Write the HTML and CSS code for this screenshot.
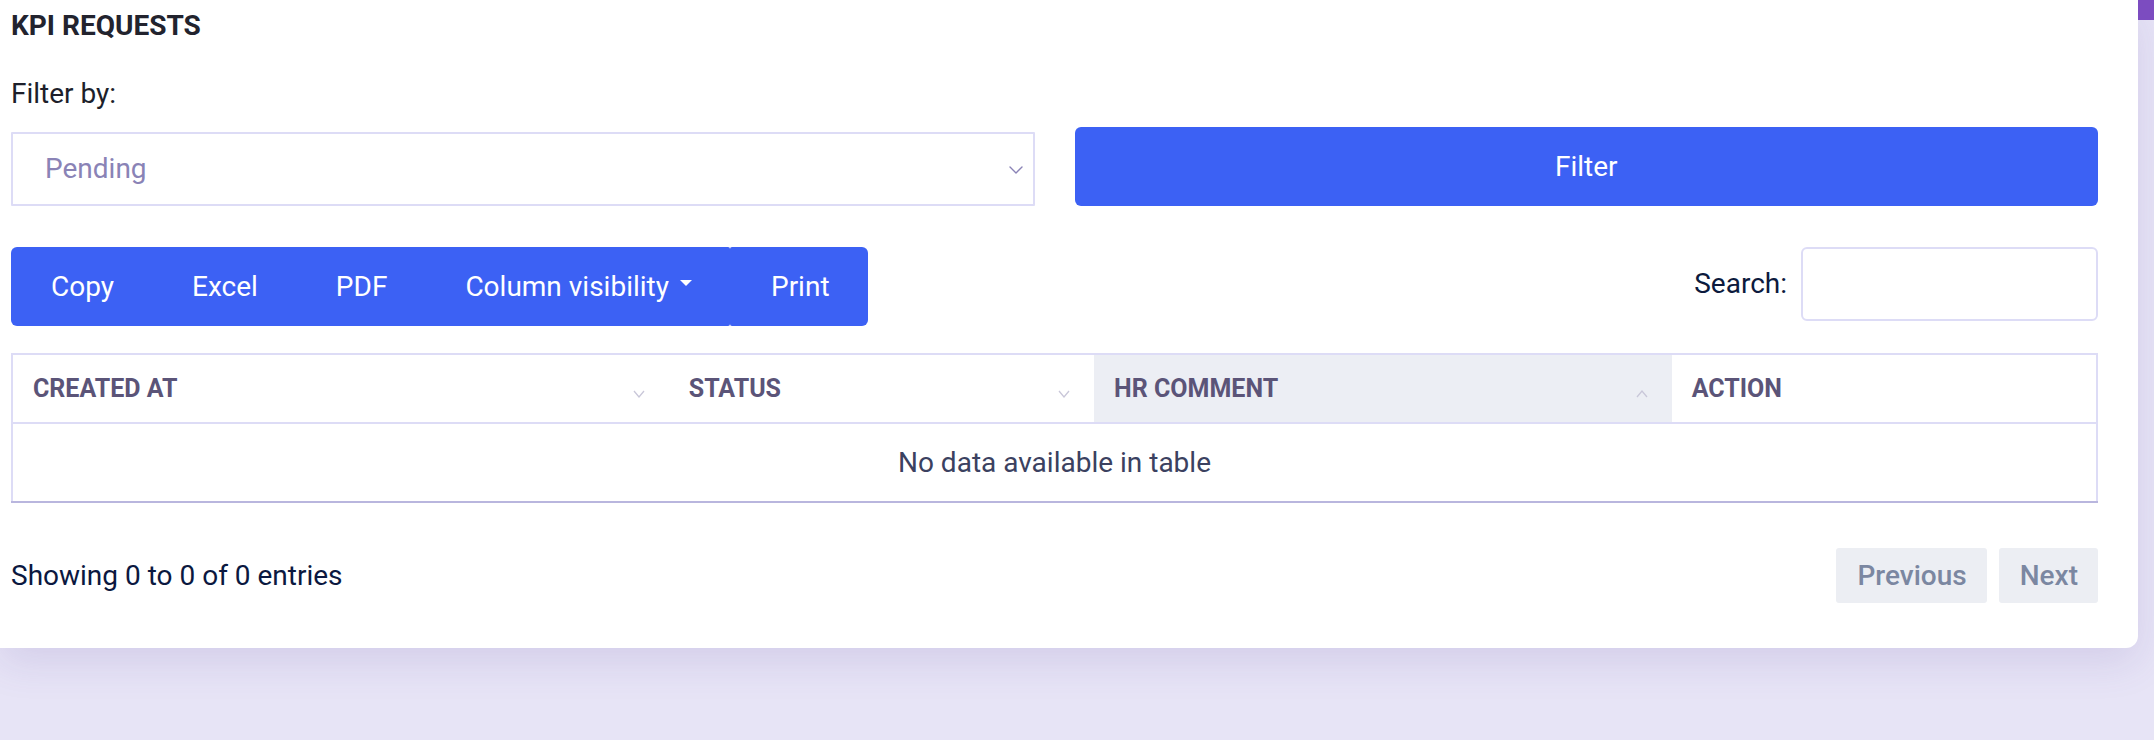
FILE: index.html
```html
<!DOCTYPE html>
<html lang="en">
<head>
<meta charset="utf-8">
<title>KPI Requests</title>
<link rel="stylesheet" href="styles.css">
</head>
<body>
<div class="page">
  <main class="card">
    <h2 class="card-title">KPI REQUESTS</h2>

    <div class="filter-row">
      <div class="filter-col">
        <label class="filter-label" for="status">Filter by:</label>
        <div class="select-wrap">
          <select id="status" class="select">
            <option>Pending</option>
            <option>Approved</option>
            <option>Rejected</option>
          </select>
          <svg class="select-chevron" width="14" height="8" viewBox="0 0 14 8" aria-hidden="true">
            <path d="M1 1 L7 7 L13 1" fill="none" stroke="#8a83b6" stroke-width="1.4" stroke-linecap="round" stroke-linejoin="round"/>
          </svg>
        </div>
      </div>
      <button class="btn btn-filter" type="button">Filter</button>
    </div>

    <div class="toolbar">
      <div class="btn-group">
        <button class="btn btn-tool btn-first" type="button">Copy</button>
        <button class="btn btn-tool" type="button">Excel</button>
        <button class="btn btn-tool" type="button">PDF</button>
        <button class="btn btn-tool btn-colvis" type="button">Column visibility<span class="caret"></span></button>
        <button class="btn btn-tool btn-last" type="button">Print</button>
      </div>
      <div class="search">
        <label class="search-label" for="search">Search:</label>
        <input id="search" class="search-input" type="search">
      </div>
    </div>

    <table class="table">
      <colgroup>
        <col class="col-created">
        <col class="col-status">
        <col class="col-comment">
        <col class="col-action">
      </colgroup>
      <thead>
        <tr>
          <th><div class="th-inner"><span>CREATED AT</span>
            <svg class="sort" width="12" height="8" viewBox="0 0 12 8"><path d="M1 1 L6 7 L11 1" fill="none" stroke="#c9c7d9" stroke-width="1.3"/></svg></div></th>
          <th><div class="th-inner"><span>STATUS</span>
            <svg class="sort" width="12" height="8" viewBox="0 0 12 8"><path d="M1 1 L6 7 L11 1" fill="none" stroke="#c9c7d9" stroke-width="1.3"/></svg></div></th>
          <th class="sorted"><div class="th-inner"><span>HR COMMENT</span>
            <svg class="sort" width="12" height="8" viewBox="0 0 12 8"><path d="M1 7 L6 1 L11 7" fill="none" stroke="#c9c7d9" stroke-width="1.3"/></svg></div></th>
          <th><div class="th-inner"><span>ACTION</span></div></th>
        </tr>
      </thead>
      <tbody>
        <tr>
          <td class="empty" colspan="4">No data available in table</td>
        </tr>
      </tbody>
    </table>

    <div class="table-footer">
      <div class="info">Showing 0 to 0 of 0 entries</div>
      <div class="pager">
        <span class="page-btn">Previous</span>
        <span class="page-btn">Next</span>
      </div>
    </div>
  </main>
  <aside class="gutter">
    <div class="gutter-top"></div>
  </aside>
</div>
</body>
</html>
```

FILE: styles.css
```css
* {
  box-sizing: border-box;
}

html,
body {
  margin: 0;
  height: 100%;
}

body {
  background: #e7e4f6;
  font-family: Roboto, "Liberation Sans", Arial, sans-serif;
  font-size: 28px;
  color: #1d1f2b;
}

.page {
  display: flex;
  align-items: flex-start;
}

.card {
  flex: 1;
  background: #ffffff;
  padding: 9px 40px 45px 11px;
  border-bottom-right-radius: 12px;
  box-shadow: 0 14px 40px rgba(90, 70, 160, 0.14);
}

.gutter {
  width: 16px;
  flex: none;
}

.gutter-top {
  height: 20px;
  background: #7c4cc0;
}

.card-title {
  margin: 0 0 30px;
  font-size: 28px;
  line-height: 1.2;
  font-weight: 700;
  color: #22232e;
}

.filter-row {
  display: flex;
  align-items: flex-end;
  gap: 40px;
}

.filter-col {
  flex: 1 1 0;
  min-width: 0;
}

.filter-label {
  display: block;
  line-height: 1.5;
  margin-bottom: 17px;
  color: #1d1f2b;
}

.select-wrap {
  position: relative;
}

.select {
  display: block;
  width: 100%;
  height: 74px;
  padding: 0 32px;
  border: 2px solid #dddcf6;
  border-radius: 1px;
  background: #ffffff;
  font-family: inherit;
  font-size: 28px;
  color: #8a83b6;
  appearance: none;
  -webkit-appearance: none;
  outline: none;
}

.select-chevron {
  position: absolute;
  right: 12px;
  top: 34px;
}

.btn {
  border: 0;
  padding: 0;
  font-family: inherit;
  font-size: 28px;
  color: #ffffff;
  background: #3c61f4;
  cursor: pointer;
}

.btn-filter {
  flex: 1 1 0;
  min-width: 0;
  height: 79px;
  border-radius: 6px;
}

.toolbar {
  margin-top: 41px;
  display: flex;
  justify-content: space-between;
  align-items: flex-start;
}

.btn-group {
  display: flex;
}

.btn-tool {
  height: 79px;
  padding: 0 39px;
  border-radius: 0;
  display: flex;
  align-items: center;
}

.btn-first {
  border-radius: 6px 0 0 6px;
  padding-left: 40px;
}

.btn-colvis {
  border-radius: 0 2px 2px 0;
  padding-right: 38px;
}

.btn-last {
  border-radius: 2px 6px 6px 2px;
  padding: 0 38px 0 41px;
}

.caret {
  display: inline-block;
  margin-left: 11px;
  width: 0;
  height: 0;
  border-left: 6px solid transparent;
  border-right: 6px solid transparent;
  border-top: 6px solid #ffffff;
  position: relative;
  top: -3px;
}

.search {
  display: flex;
  align-items: center;
  gap: 14px;
}

.search-label {
  color: #0c1a3d;
}

.search-input {
  width: 297px;
  height: 74px;
  border: 2px solid #dddcf6;
  border-radius: 6px;
  outline: none;
  font-family: inherit;
  font-size: 28px;
  padding: 0 14px;
}

.table {
  margin-top: 27px;
  width: 100%;
  border-collapse: collapse;
  table-layout: fixed;
  border: 2px solid #dddcf6;
}

.col-created { width: 31.5%; }
.col-status { width: 20.4%; }
.col-comment { width: 27.7%; }
.col-action { width: 20.4%; }

.table th {
  height: 69px;
  padding: 0 24px 0 20px;
  text-align: left;
  font-size: 25px;
  font-weight: 700;
  color: #5b5478;
  border-bottom: 2px solid #dddcf6;
  vertical-align: middle;
}

.table th.sorted {
  background: #eceef4;
}

.th-inner {
  display: flex;
  justify-content: space-between;
  align-items: center;
}

.sort {
  flex: none;
  margin-top: 12px;
}

.table td.empty {
  height: 79px;
  text-align: center;
  color: #3b4160;
  font-size: 28px;
  border-bottom: 2px solid #b9b6de;
}

.table-footer {
  margin-top: 45px;
  display: flex;
  justify-content: space-between;
  align-items: center;
}

.info {
  color: #0b1840;
}

.pager {
  display: flex;
  gap: 12px;
}

.page-btn {
  display: flex;
  align-items: center;
  height: 55px;
  padding: 0 20px 0 21px;
  background: #eceef3;
  border-radius: 3px;
  color: #7b87a1;
  font-weight: 500;
}
```
